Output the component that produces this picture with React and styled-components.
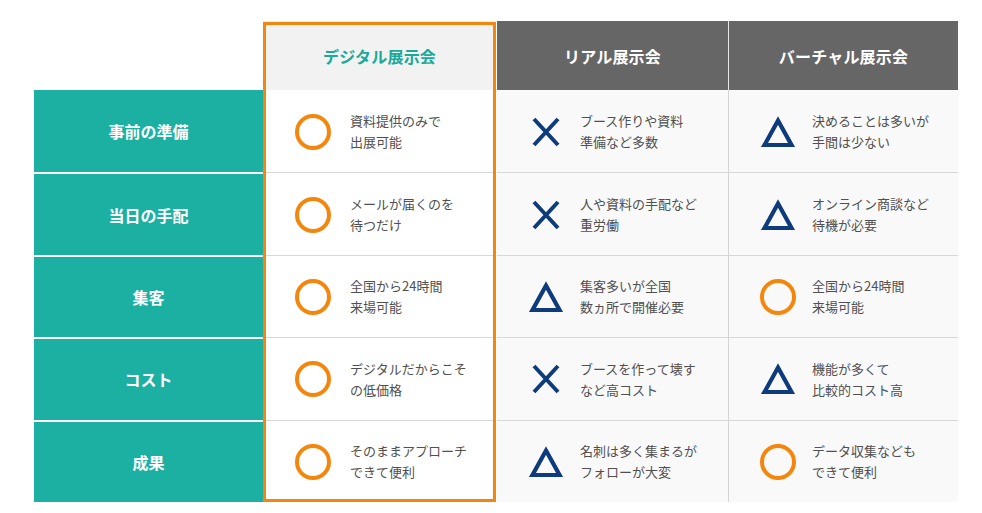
import React from 'react'
import styled, { createGlobalStyle } from 'styled-components'

const GlobalStyle = createGlobalStyle`
  body {
    margin: 0;
    background: #fff;
    font-family: "Noto Sans CJK JP", "Noto Sans", sans-serif;
  }
`

const ORANGE = '#f5860c'
const NAVY = '#0d3b7c'
const TEAL = '#1cb0a3'

const Page = styled.div`
  padding: 21px 0 0 34px;
`

const Table = styled.div`
  display: grid;
  grid-template-columns: 229px 234px 231px 230px;
  grid-template-rows: 69px repeat(5, 82.4px);
`

const Corner = styled.div`
  grid-column: 1;
  grid-row: 1;
`

const Head = styled.div`
  grid-column: ${p => p.$col};
  grid-row: 1;
  display: flex;
  align-items: center;
  justify-content: center;
  font-size: 16px;
  font-weight: 700;
  letter-spacing: 0.2px;
  background: ${p => (p.$featured ? '#f2f2f2' : '#666666')};
  color: ${p => (p.$featured ? '#1aa99b' : '#fff')};
  border-left: ${p => (p.$divider ? '1px solid #e6e6e6' : 'none')};
  margin-right: ${p => (p.$featured ? '1px' : '0')};
`

const Label = styled.div`
  grid-column: 1;
  grid-row: ${p => p.$row};
  display: flex;
  align-items: center;
  justify-content: center;
  background: ${TEAL};
  color: #fff;
  font-size: 16px;
  font-weight: 700;
  box-sizing: border-box;
  border-top: ${p => (p.$first ? 'none' : '2px solid #fff')};
`

const Cell = styled.div`
  grid-column: ${p => p.$col};
  grid-row: ${p => p.$row};
  display: flex;
  align-items: center;
  gap: ${p => (p.$featured ? '19px' : '16px')};
  padding-left: ${p => (p.$featured ? '32px' : '31px')};
  box-sizing: border-box;
  background: ${p => (p.$featured ? '#fff' : '#f9f9f9')};
  border-top: ${p => (p.$first ? 'none' : '1px solid #d8d8d8')};
  border-left: ${p => (p.$divider ? '1px solid #d4d4d4' : 'none')};
  margin-right: ${p => (p.$featured ? '1px' : '0')};
`

const IconBox = styled.svg`
  flex: none;
  width: 36px;
  height: 36px;
  margin-top: 1px;
`

const Text = styled.p`
  margin: 0;
  font-size: 13px;
  line-height: 21px;
  color: #505050;
`

const Frame = styled.div`
  grid-column: 2;
  grid-row: 1 / -1;
  margin: 1px 1px 0 0;
  border: 3px solid ${ORANGE};
  pointer-events: none;
`

const Mark = ({ type }) => {
  if (type === 'o') {
    return (
      <IconBox viewBox="0 0 36 36">
        <circle cx="18" cy="18" r="16" fill="none" stroke={ORANGE} strokeWidth="4" />
      </IconBox>
    )
  }
  if (type === 'x') {
    return (
      <IconBox viewBox="0 0 36 36">
        <path d="M6 5 L30 31 M30 5 L6 31" fill="none" stroke={NAVY} strokeWidth="4" />
      </IconBox>
    )
  }
  return (
    <IconBox viewBox="0 0 36 36">
      <polygon points="18,6.5 31.5,31 4.5,31" fill="none" stroke={NAVY} strokeWidth="4.2" strokeLinejoin="miter" />
    </IconBox>
  )
}

const heads = ['デジタル展示会', 'リアル展示会', 'バーチャル展示会']

const rows = [
  {
    label: '事前の準備',
    cells: [
      ['o', '資料提供のみで', '出展可能'],
      ['x', 'ブース作りや資料', '準備など多数'],
      ['t', '決めることは多いが', '手間は少ない'],
    ],
  },
  {
    label: '当日の手配',
    cells: [
      ['o', 'メールが届くのを', '待つだけ'],
      ['x', '人や資料の手配など', '重労働'],
      ['t', 'オンライン商談など', '待機が必要'],
    ],
  },
  {
    label: '集客',
    cells: [
      ['o', '全国から24時間', '来場可能'],
      ['t', '集客多いが全国', '数ヵ所で開催必要'],
      ['o', '全国から24時間', '来場可能'],
    ],
  },
  {
    label: 'コスト',
    cells: [
      ['o', 'デジタルだからこそ', 'の低価格'],
      ['x', 'ブースを作って壊す', 'など高コスト'],
      ['t', '機能が多くて', '比較的コスト高'],
    ],
  },
  {
    label: '成果',
    cells: [
      ['o', 'そのままアプローチ', 'できて便利'],
      ['t', '名刺は多く集まるが', 'フォローが大変'],
      ['o', 'データ収集なども', 'できて便利'],
    ],
  },
]

export default function App() {
  return (
    <Page>
      <GlobalStyle />
      <Table>
        <Corner />
        {heads.map((h, i) => (
          <Head key={h} $col={i + 2} $featured={i === 0} $divider={i === 2}>
            {h}
          </Head>
        ))}
        {rows.map((row, r) => (
          <React.Fragment key={row.label}>
            <Label $row={r + 2} $first={r === 0}>{row.label}</Label>
            {row.cells.map(([mark, a, b], i) => (
              <Cell
                key={i}
                $row={r + 2}
                $col={i + 2}
                $first={r === 0}
                $featured={i === 0}
                $divider={i === 2}
              >
                <Mark type={mark} />
                <Text>
                  {a}
                  <br />
                  {b}
                </Text>
              </Cell>
            ))}
          </React.Fragment>
        ))}
        <Frame />
      </Table>
    </Page>
  )
}
